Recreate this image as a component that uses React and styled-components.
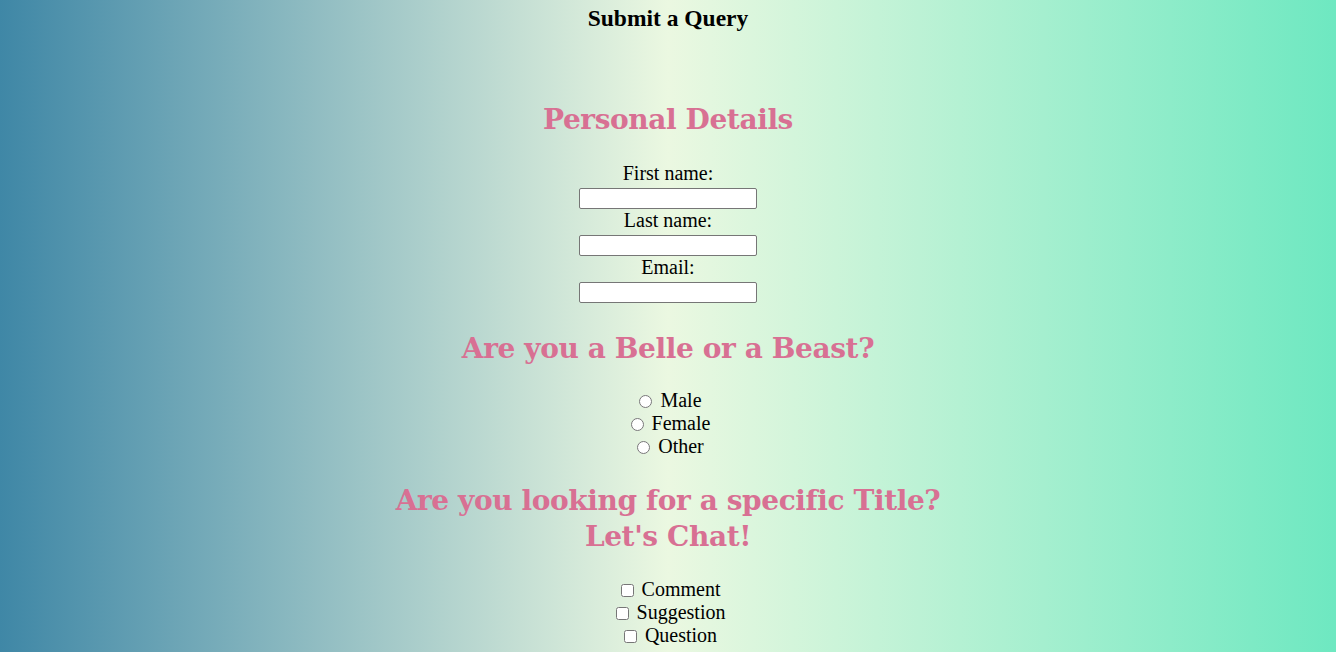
import React from "react";
import styled, { createGlobalStyle } from "styled-components";

const Global = createGlobalStyle`
  html {
    min-height: 100%;
    background: linear-gradient(to right, #3f87a6, #ebf8e1, #6ee8c1);
  }
  body {
    margin: 0;
    min-height: 652px;
    font-family: "Liberation Serif", "Times New Roman", serif;
    color: #000;
  }
`;

const Page = styled.form`
  display: flex;
  flex-direction: column;
  align-items: center;
  padding-top: 4px;
  text-align: center;
`;

const Title = styled.div`
  font-size: 23.5px;
  font-weight: bold;
  line-height: 28px;
`;

const SectionHeading = styled.h2`
  margin: ${(p) => p.$top}px 0 0;
  font-family: "DejaVu Serif", Georgia, serif;
  font-weight: bold;
  font-size: 28px;
  line-height: 36px;
  color: #d87093;
  letter-spacing: -0.4px;
`;

const Fields = styled.div`
  display: flex;
  flex-direction: column;
  align-items: center;
  margin-top: 24px;
`;

const FieldLabel = styled.label`
  font-size: 20px;
  line-height: 23px;
  display: block;
`;

const TextInput = styled.input`
  box-sizing: border-box;
  width: 178px;
  height: 21px;
  margin: 3px 0 0;
  border: 1px solid #767676;
  border-radius: 2px;
  background: #fff;
  font-size: 13px;
  padding: 1px 2px;
`;

const Options = styled.div`
  display: flex;
  flex-direction: column;
  align-items: center;
  margin-top: ${(p) => p.$top}px;
`;

const OptionRow = styled.label`
  display: flex;
  align-items: center;
  font-size: 20px;
  line-height: 23px;
  height: 23px;
`;

const Choice = styled.input`
  width: 13px;
  height: 13px;
  margin: 2px 8px 0 5px;
`;

export default function App() {
  return (
    <>
      <Global />
      <Page onSubmit={(e) => e.preventDefault()}>
        <Title>Submit a Query</Title>
        <SectionHeading $top={70}>Personal Details</SectionHeading>
        <Fields>
          <FieldLabel htmlFor="fn">First name:</FieldLabel>
          <TextInput id="fn" type="text" />
          <FieldLabel htmlFor="ln">Last name:</FieldLabel>
          <TextInput id="ln" type="text" />
          <FieldLabel htmlFor="em">Email:</FieldLabel>
          <TextInput id="em" type="text" />
        </Fields>
        <SectionHeading $top={28}>Are you a Belle or a Beast?</SectionHeading>
        <Options $top={22}>
          <OptionRow><Choice type="radio" name="g" />Male</OptionRow>
          <OptionRow><Choice type="radio" name="g" />Female</OptionRow>
          <OptionRow><Choice type="radio" name="g" />Other</OptionRow>
        </Options>
        <SectionHeading $top={25}>
          Are you looking for a specific Title?
          <br />
          Let's Chat!
        </SectionHeading>
        <Options $top={23}>
          <OptionRow><Choice type="checkbox" />Comment</OptionRow>
          <OptionRow><Choice type="checkbox" />Suggestion</OptionRow>
          <OptionRow><Choice type="checkbox" />Question</OptionRow>
        </Options>
      </Page>
    </>
  );
}
